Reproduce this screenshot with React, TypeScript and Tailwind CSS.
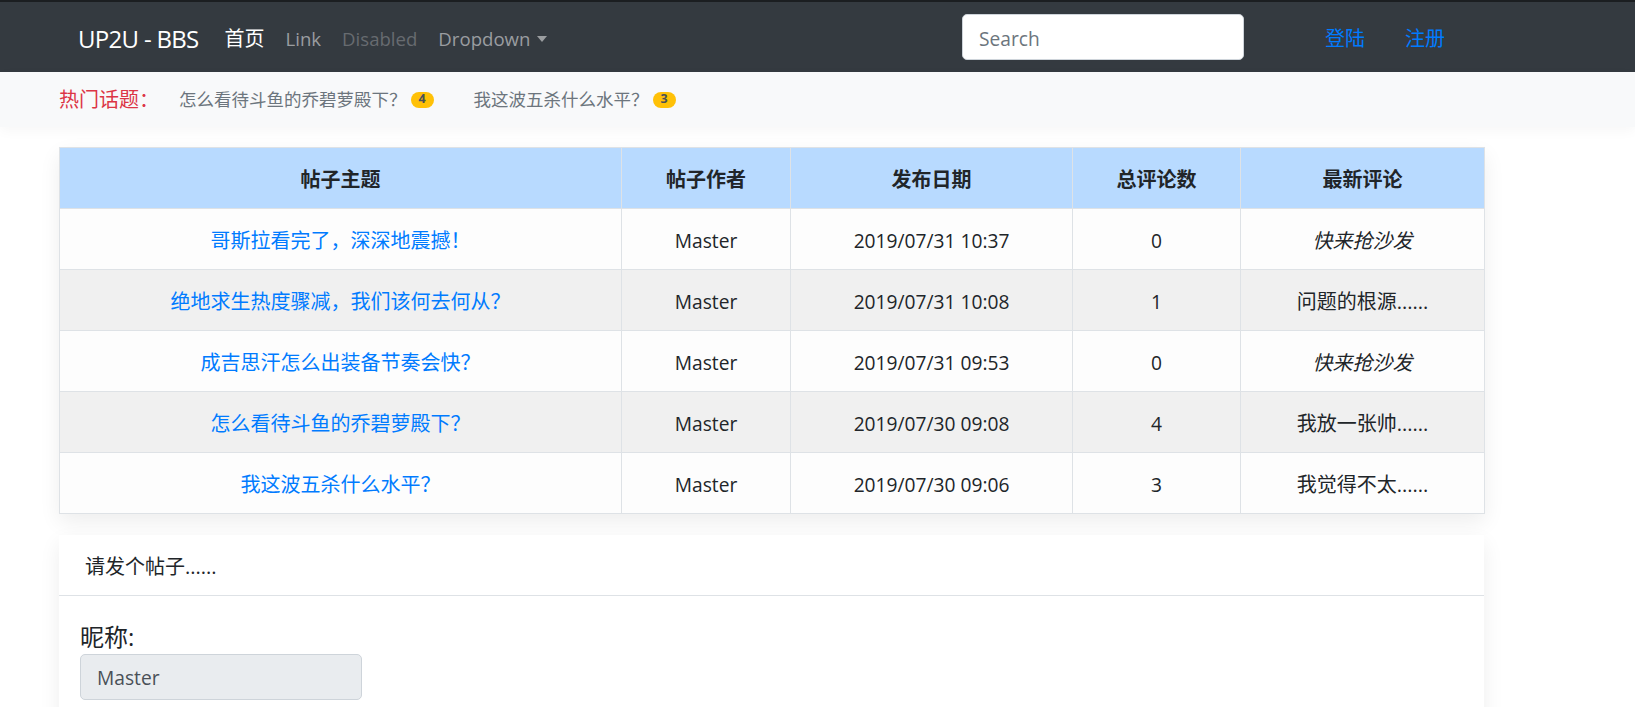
import React from 'react';

// Rows of the topic table
interface Topic {
  title: string;
  author: string;
  date: string;
  count: number;
  latest: string;
  empty?: boolean;
}

const topics: Topic[] = [
  { title: '哥斯拉看完了，深深地震撼！', author: 'Master', date: '2019/07/31 10:37', count: 0, latest: '快来抢沙发', empty: true },
  { title: '绝地求生热度骤减，我们该何去何从？', author: 'Master', date: '2019/07/31 10:08', count: 1, latest: '问题的根源......' },
  { title: '成吉思汗怎么出装备节奏会快？', author: 'Master', date: '2019/07/31 09:53', count: 0, latest: '快来抢沙发', empty: true },
  { title: '怎么看待斗鱼的乔碧萝殿下？', author: 'Master', date: '2019/07/30 09:08', count: 4, latest: '我放一张帅......' },
  { title: '我这波五杀什么水平？', author: 'Master', date: '2019/07/30 09:06', count: 3, latest: '我觉得不太......' },
];

const hot = [
  { title: '怎么看待斗鱼的乔碧萝殿下？', count: 4 },
  { title: '我这波五杀什么水平？', count: 3 },
];

const headers = ['帖子主题', '帖子作者', '发布日期', '总评论数', '最新评论'];

export default function App() {
  return (
    <div className="h-[707px] overflow-hidden bg-white text-[#212529] font-[family-name:'Open_Sans','Noto_Sans_CJK_SC',sans-serif]">
      {/* navbar */}
      <nav className="h-[72px] bg-[#343a40] border-t-2 border-[#1b1e21] flex items-center pl-[78px] pr-[190px]">
        <div className="flex items-center flex-1 pt-[4px]">
          <span className="text-white text-[24px] tracking-[-0.7px] leading-none">UP2U - BBS</span>
          <a className="ml-[26px] text-white text-[20px] leading-none">首页</a>
          <a className="ml-[21px] text-[#9a9da0] text-[18.6px] leading-none">Link</a>
          <span className="ml-[21px] text-[#676b70] text-[18.6px] leading-none">Disabled</span>
          <a className="ml-[21px] text-[#9a9da0] text-[18.6px] leading-none flex items-center">
            Dropdown
            <span className="ml-[7px] w-0 h-0 border-x-[5px] border-x-transparent border-t-[6px] border-t-[#9a9da0]" />
          </a>
        </div>
        <input
          className="w-[282px] h-[46px] bg-white rounded-[5px] border border-[#ced4da] px-[16px] pt-[2px] text-[19.2px] text-[#495057] placeholder:text-[#6c757d] outline-none"
          placeholder="Search"
        />
        <a className="ml-[81px] pt-[4px] text-[#007bff] text-[20px] leading-none">登陆</a>
        <a className="ml-[40px] pt-[4px] text-[#007bff] text-[20px] leading-none">注册</a>
      </nav>

      {/* hot topics bar */}
      <div className="h-[55px] bg-[#f8f9fa] flex items-center pl-[59px] text-[17.5px] shadow-[0_4px_12px_rgba(0,0,0,0.035)] relative">
        <span className="w-[88px] whitespace-nowrap text-[20px] text-[#dc3545]">热门话题：</span>
        {hot.map((h, i) => (
          <div key={h.title} className={`flex items-center ${i === 0 ? 'ml-[32px]' : 'ml-[40px]'}`}>
            <a className="text-[#6c757d]">{h.title}</a>
            <span className="ml-[4px] h-[16px] w-[23px] rounded-full bg-[#ffc107] text-[#495057] text-[12.5px] font-bold flex items-center justify-center leading-none">
              {h.count}
            </span>
          </div>
        ))}
      </div>

      <main className="pl-[59px] pt-[20px]">
        <table className="w-[1425px] table-fixed border-collapse text-center shadow-[0_8px_20px_rgba(0,0,0,0.07)]">
          <colgroup>
            <col className="w-[562px]" />
            <col className="w-[169px]" />
            <col className="w-[282px]" />
            <col className="w-[168px]" />
            <col className="w-[244px]" />
          </colgroup>
          <thead>
            <tr className="bg-[#b8daff]">
              {headers.map((h) => (
                <th key={h} className="h-[61px] pt-[3px] border border-[#dee2e6] font-bold text-[20px]">
                  {h}
                </th>
              ))}
            </tr>
          </thead>
          <tbody>
            {topics.map((t, i) => (
              <tr key={t.title} className={i % 2 === 1 ? 'bg-[#f0f0f0]' : 'bg-[#fdfdfd]'}>
                <td className="h-[61px] pt-[4px] border border-[#dee2e6] text-[#007bff] text-[20px]">{t.title}</td>
                <td className="pt-[4px] border border-[#dee2e6] text-[19.2px]">{t.author}</td>
                <td className="pt-[4px] border border-[#dee2e6] text-[19.2px]">{t.date}</td>
                <td className="pt-[4px] border border-[#dee2e6] text-[19.2px]">{t.count}</td>
                <td className={`pt-[4px] border border-[#dee2e6] text-[20px] ${t.empty ? 'italic' : ''}`}>{t.latest}</td>
              </tr>
            ))}
          </tbody>
        </table>

        {/* new post card */}
        <div className="mt-[21px] w-[1425px] bg-white shadow-[0_8px_20px_rgba(0,0,0,0.07)]">
          <div className="h-[61px] pt-[4px] border-b border-[#dee2e6] flex items-center pl-[26px] text-[20px]">
            请发个帖子......
          </div>
          <div className="pt-[24px] px-[21px] pb-[24px]">
            <label className="block text-[24px] leading-[34px]">昵称:</label>
            <input
              readOnly
              value="Master"
              className="w-[282px] h-[46px] rounded-[5px] border border-[#ced4da] bg-[#e9ecef] px-[16px] text-[19.2px] text-[#495057] outline-none"
            />
            <label className="block mt-[20px] text-[24px] leading-[36px]">内容:</label>
            <textarea className="w-full h-[150px] rounded-[5px] border border-[#ced4da]" />
          </div>
        </div>
      </main>
    </div>
  );
}
